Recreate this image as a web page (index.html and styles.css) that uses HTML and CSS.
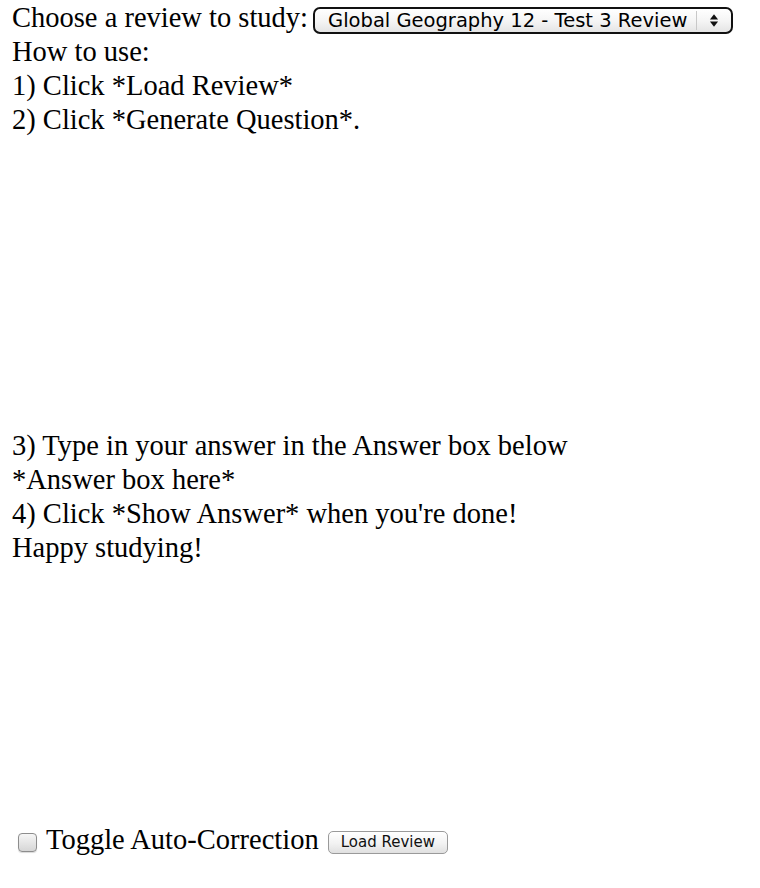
FILE: index.html
```html
<!DOCTYPE html>
<html>
<head>
<meta charset="utf-8">
<link rel="stylesheet" href="styles.css">
</head>
<body>
<div class="page">
  <div class="line chooser">
    <span>Choose a review to study:</span>
    <span class="select-wrap">
      <select class="review-select">
        <option>Global Geography 12 - Test 3 Review</option>
      </select>
      <span class="select-arrows">
        <svg class="arrows-icon" viewBox="0 0 11 16"><path d="M5.5 1 L10 7 H1 Z" fill="#111"/><path d="M5.5 15 L10 9 H1 Z" fill="#111"/></svg>
      </span>
    </span>
  </div>
  <div class="line">How to use:</div>
  <div class="line">1) Click *Load Review*</div>
  <div class="line">2) Click *Generate Question*.</div>
  <div class="question-area"></div>
  <div class="line">3) Type in your answer in the Answer box below</div>
  <div class="line">*Answer box here*</div>
  <div class="line">4) Click *Show Answer* when you're done!</div>
  <div class="line">Happy studying!</div>
  <div class="answer-area"></div>
  <div class="controls">
    <label class="toggle"><input type="checkbox" class="check"><span>Toggle Auto-Correction</span></label>
    <button class="load-btn">Load Review</button>
  </div>
</div>
</body>
</html>
```
FILE: styles.css
```css
html, body {
  margin: 0;
  padding: 0;
  background: #fff;
}
.page {
  padding: 1px 12px 0 12px;
  font-family: "Liberation Serif", "Times New Roman", serif;
  font-size: 28.5px;
  line-height: 34px;
  color: #000;
}
.line {
  height: 34px;
  white-space: nowrap;
}
.chooser {
  display: flex;
  align-items: flex-start;
  gap: 5px;
}
.select-wrap {
  position: relative;
  display: flex;
  height: 27px;
  margin-top: 6px;
}
.review-select {
  -webkit-appearance: none;
  appearance: none;
  height: 27px;
  width: 420px;
  box-sizing: border-box;
  border: 2px solid #111;
  border-radius: 7px;
  background: linear-gradient(#ffffff, #f4f4f4 55%, #e4e4e4);
  font-family: "DejaVu Sans", "Liberation Sans", sans-serif;
  font-size: 19.5px;
  color: #000;
  padding: 0 40px 0 13px;
  line-height: 23px;
  margin: 0;
  outline: none;
}
.select-arrows {
  position: absolute;
  right: 2px;
  top: 4px;
  bottom: 4px;
  width: 34px;
  border-left: 1px solid #c8c8c8;
  display: flex;
  align-items: center;
  justify-content: center;
  pointer-events: none;
}
.arrows-icon {
  flex: none;
  width: 10px;
  height: 15px;
  display: block;
}
.question-area {
  height: 292px;
}
.answer-area {
  height: 258px;
}
.controls {
  display: flex;
  align-items: flex-start;
  gap: 9px;
  padding-left: 6px;
  height: 34px;
}
.toggle {
  display: flex;
  align-items: flex-start;
  gap: 9px;
}
.check {
  -webkit-appearance: none;
  appearance: none;
  width: 19px;
  height: 19px;
  margin: 10px 0 0 0;
  border: 1px solid #8d8d8d;
  border-radius: 4px;
  background: linear-gradient(#f6f6f6, #d6d6d6);
  box-shadow: 0 1px 1px rgba(0,0,0,0.15);
}
.load-btn {
  font-family: "DejaVu Sans", "Liberation Sans", sans-serif;
  font-size: 15px;
  color: #111;
  height: 23px;
  padding: 0 12px;
  margin-top: 8px;
  border: 1px solid #9a9a9a;
  border-radius: 5px;
  background: linear-gradient(#ffffff, #f2f2f2 55%, #e0e0e0);
  line-height: 21px;
}
```
